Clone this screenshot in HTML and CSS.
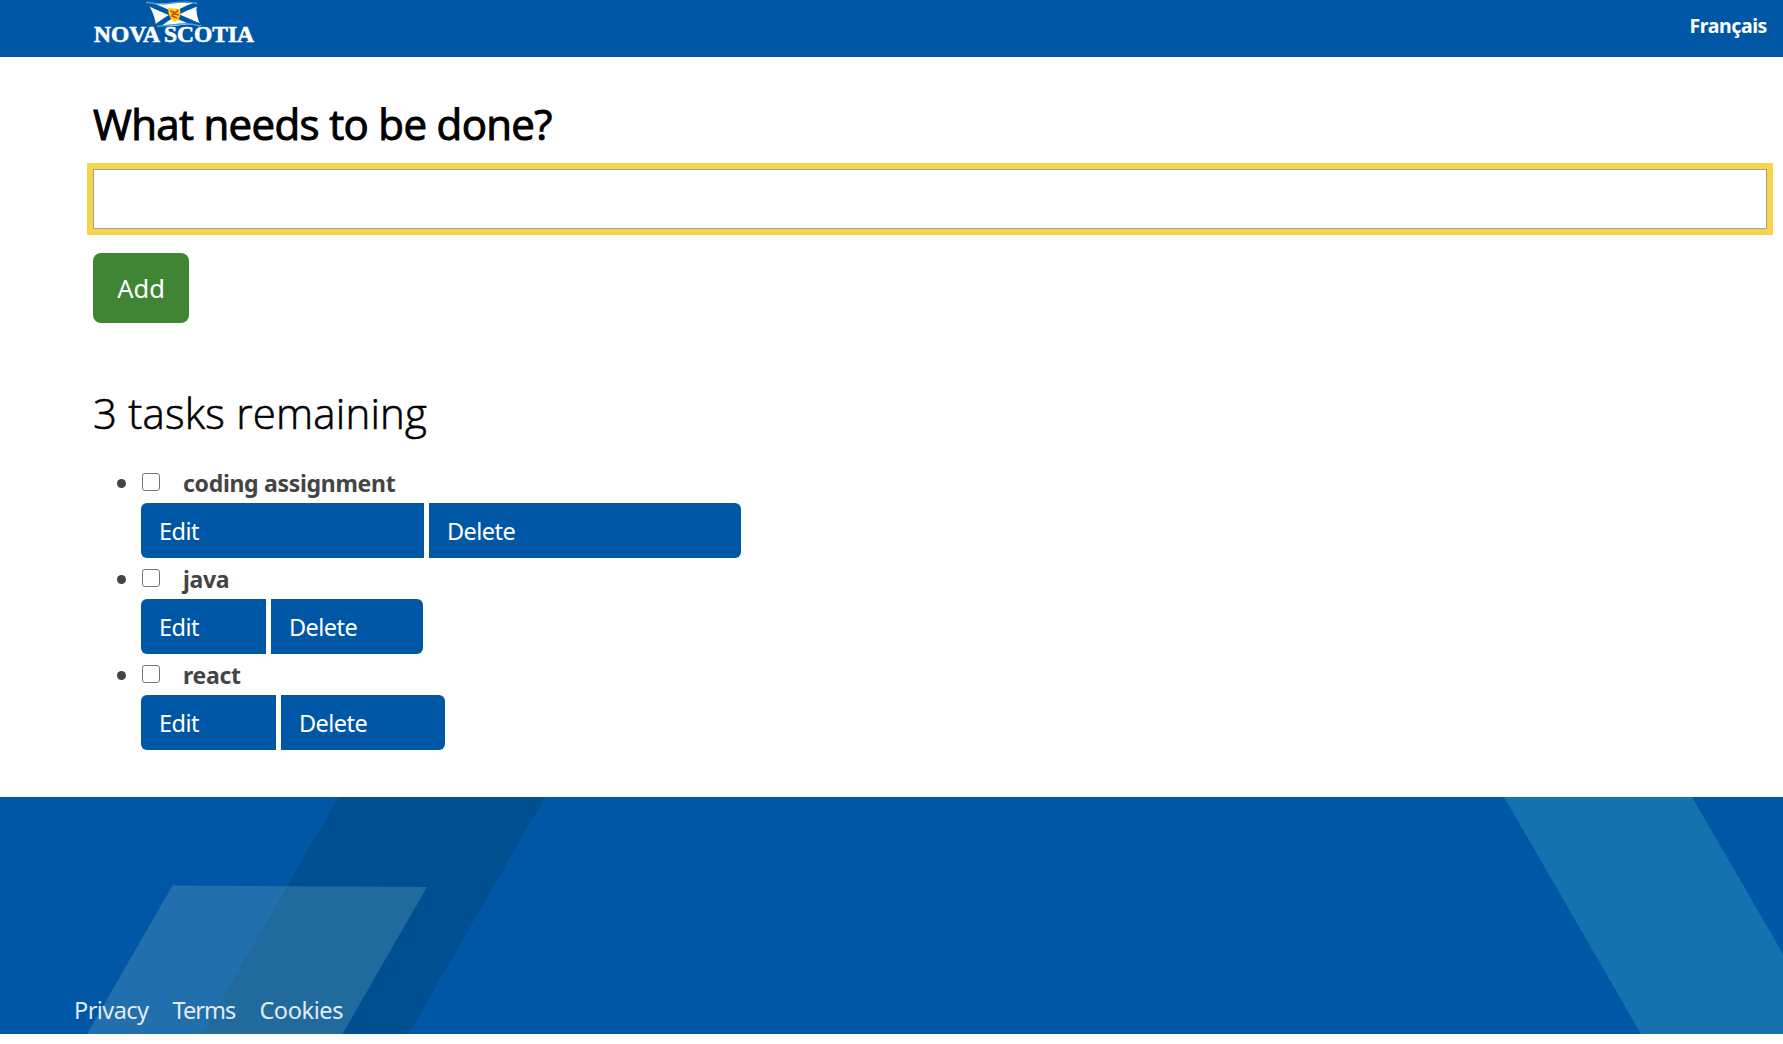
FILE: index.html
```html
<!DOCTYPE html>
<html lang="en">
<head>
<meta charset="utf-8">
<title>Tasks</title>
<link rel="stylesheet" href="styles.css">
</head>
<body>
<header class="site-header">
  <svg class="logo" width="166" height="57" viewBox="91 0 166 57" role="img" aria-label="Nova Scotia">
    <path fill="#fff" d="M146 2Q158 5 172 3Q186 1 197 4Q195 15 201 26Q188 23 175 26Q164 27 156 25Q154 11 146 2Z"/>
    <path stroke="#0057a6" stroke-width="5" fill="none" d="M147 3L200 26M197 4Q175 12 157 26"/>
    <path stroke="#4aa0dc" stroke-width="1.4" fill="none" d="M147 2.300Q160 5 172 3Q184 1 197 3.500M157 26.500L176 24.500Q188 22.500 200 26"/>
    <path fill="#fdd20a" d="M168 8L180 9Q182 18 175 22Q168 18 168 8Z"/>
    <path stroke="#d8451f" stroke-width="1.700" fill="none" d="M170 11L174 12L172 16L177 18M178 10L175 14L179 15"/>
    <text class="logo-text" x="94" y="42" textLength="66" lengthAdjust="spacingAndGlyphs">NOVA</text>
    <text class="logo-text" x="164" y="42" textLength="90" lengthAdjust="spacingAndGlyphs">SCOTIA</text>
  </svg>
  <a class="lang">Français</a>
</header>
<main class="content">
  <h1 class="title">What needs to be done?</h1>
  <input class="task-input" type="text" aria-label="What needs to be done?">
  <button class="add">Add</button>
  <h2 class="remaining">3 tasks remaining</h2>
  <ul class="tasks">
    <li class="task"><label class="task-name"><input class="check" type="checkbox">coding assignment</label>
      <div class="actions"><button class="btn" style="width:283px">Edit</button><button class="btn" style="width:312px">Delete</button></div></li>
    <li class="task"><label class="task-name"><input class="check" type="checkbox">java</label>
      <div class="actions"><button class="btn" style="width:125px">Edit</button><button class="btn" style="width:152px">Delete</button></div></li>
    <li class="task"><label class="task-name"><input class="check" type="checkbox">react</label>
      <div class="actions"><button class="btn" style="width:135px">Edit</button><button class="btn" style="width:164px">Delete</button></div></li>
  </ul>
</main>
<footer class="site-footer">
  <svg class="shapes" width="1783" height="237" viewBox="0 797 1783 237" aria-hidden="true">
    <path fill="#004f90" d="M338.500 797H545L408.500 1034H202Z"/>
    <path fill="#5f9fb8" fill-opacity=".35" d="M172.500 885.500L427 887L342.500 1034H87Z"/>
    <path fill="#1473ae" d="M1504 797H1692L1783 954V1034H1641Z"/>
  </svg>
  <nav class="links"><a class="privacy">Privacy</a><a class="terms">Terms</a><a class="cookies">Cookies</a></nav>
</footer>
</body>
</html>
```
FILE: styles.css
```css
* { box-sizing: border-box; }
body { margin: 0; background: #fff; color: #444; font: 24px "Noto Sans", "Open Sans", sans-serif; }
.site-header { height: 57px; padding: 0 16px 0 91px; display: flex; justify-content: space-between; background: #0057a6; }
.logo { display: block; overflow: visible; }
.logo-text { font: bold 22.500px "Liberation Serif", serif; fill: #fff; stroke: #fff; stroke-width: .6px; }
.lang { color: #fff; font-weight: 700; font-size: 19.500px; line-height: 52px; letter-spacing: -.4px; }
.content { padding: 36px 16px 47px 93px; }
.title, .remaining { font-family: "Open Sans", sans-serif; color: #000; line-height: 60px; }
.title { margin: 0; padding-top: 1px; height: 76px; font-size: 42px; font-weight: 400; letter-spacing: -.65px; -webkit-text-stroke: 1px #000; }
.task-input { display: block; width: 100%; height: 60px; margin: 0; border: 1px solid #a0a0a0; border-radius: 0; outline: 6px solid #f8d44a; }
.add { display: block; width: 96px; height: 70px; margin: 24px 0 59px; padding: 0; border: 0; border-radius: 8px; background: #408534; color: #fff; font: 25.500px "Noto Sans", sans-serif; }
.remaining { margin: 0; padding-top: 1px; height: 80px; font-size: 42px; font-weight: 300; letter-spacing: .2px; -webkit-text-stroke: .6px #000; }
.tasks { margin: 0; padding: 0 0 0 48px; list-style: none; }
.task-name { display: flex; align-items: center; height: 41px; font-weight: 700; font-size: 23px; letter-spacing: -.3px; }
.task-name::before { content: ""; width: 9px; height: 9px; margin: 1px 15px 0 -24px; border-radius: 50%; background: #444; }
.check { appearance: none; width: 18px; height: 18px; margin: 0 23px 2px 1px; border: 1px solid #767676; border-radius: 3px; background: #fff; }
.actions { display: flex; gap: 5px; }
.btn { height: 55px; padding: 0 0 0 18px; border: 0; background: #0057a6; color: #fff; text-align: left; font: 23.500px "Noto Sans", sans-serif; letter-spacing: -.55px; }
.btn:first-child { border-radius: 6px 0 0 6px; }
.btn:last-child { border-radius: 0 6px 6px 0; }
.site-footer { display: grid; height: 237px; background: #0057a6; overflow: hidden; }
.shapes, .links { grid-area: 1 / 1; }
.links { display: flex; gap: 24px; align-self: end; z-index: 1; padding: 0 0 0 74px; line-height: 47px; color: #e2ebf4; font-size: 23.500px; }
.privacy { letter-spacing: -.55px; }
.terms { letter-spacing: -.95px; }
.cookies { letter-spacing: -.4px; }
```
